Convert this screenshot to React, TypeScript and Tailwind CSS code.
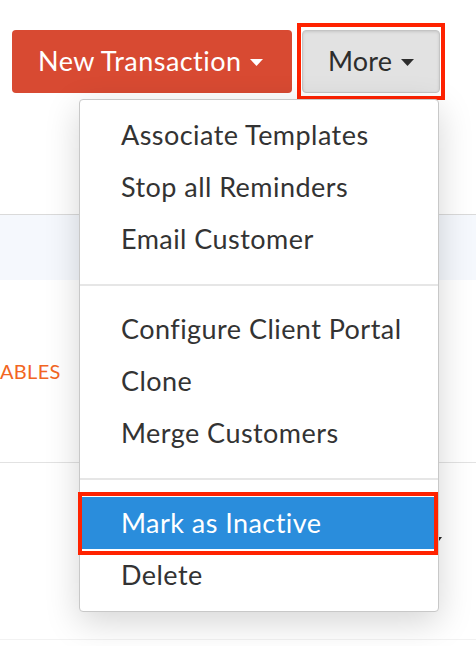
const menuTop = ["Associate Templates", "Stop all Reminders", "Email Customer"];
const menuMid = ["Configure Client Portal", "Clone", "Merge Customers"];

function Caret({ color }: { color: string }) {
  return (
    <svg width="13" height="7" viewBox="0 0 13 7" className="ml-[9px] mt-[2px]">
      <polygon points="0,0 13,0 6.5,7" fill={color} />
    </svg>
  );
}

function Item({ label }: { label: string }) {
  return <div className="flex h-[52px] items-center pl-[41px] text-[#333]">{label}</div>;
}

function Divider() {
  return <div className="mt-[19px] mb-[17px] h-[2px] bg-[#e6e6e6]" />;
}

export default function App() {
  return (
    <div className="relative h-[646px] w-[476px] overflow-hidden bg-white font-['Lato','Open_Sans',sans-serif]">
      <div className="h-[214px] pt-[30px] pl-[12px]">
        <div className="flex gap-[10px] text-[27px] tracking-[0.45px]">
          <button className="flex h-[63px] w-[280px] items-center rounded-[4px] bg-[#d84a32] pl-[26px] text-white">
            New Transaction
            <Caret color="#ffffff" />
          </button>
          <div className="relative">
            <button className="flex h-[63px] w-[138px] items-center rounded-[4px] border border-[#c4c4c4] bg-[#e2e2e2] pl-[25px] tracking-[0.2px] text-[#2d2d2d] shadow-[inset_0_1px_3px_rgba(0,0,0,0.12)]">
              More
              <Caret color="#2d2d2d" />
            </button>
            <div className="absolute -top-[7px] -bottom-[7px] -left-[5px] -right-[5px] border-4 border-[#ff2200]" />
          </div>
        </div>
      </div>

      <div className="h-[66px] border-t border-[#dadada] bg-[#f5f8fd]" />

      <div className="flex h-[183px] items-center border-b border-[#e2e2e2] text-[20px] tracking-[0.3px] text-[#f26522]">
        ABLES
      </div>

      <div className="relative h-[177px] border-b border-[#f2f2f2]">
        <svg width="6" height="4" viewBox="0 0 6 4" className="absolute left-[436px] top-[74px]">
          <polygon points="0,0 6,0 3,4" fill="#222" />
        </svg>
      </div>

      <div className="absolute left-[79px] top-[99px] w-[360px] rounded-[4px] border border-[#c8c8c8] bg-white pt-[9px] pb-[10px] text-[27px] tracking-[0.45px] shadow-[0_10px_34px_rgba(0,0,0,0.17)]">
        {menuTop.map((label) => (
          <Item key={label} label={label} />
        ))}
        <Divider />
        {menuMid.map((label) => (
          <Item key={label} label={label} />
        ))}
        <Divider />
        <div className="relative flex h-[52px] items-center bg-[#2a8ddc] pl-[41px] text-white">
          Mark as Inactive
          <div className="absolute -top-[5px] -bottom-[6px] -left-[2px] right-0 border-4 border-[#ff2200]" />
        </div>
        <Item label="Delete" />
      </div>
    </div>
  );
}
